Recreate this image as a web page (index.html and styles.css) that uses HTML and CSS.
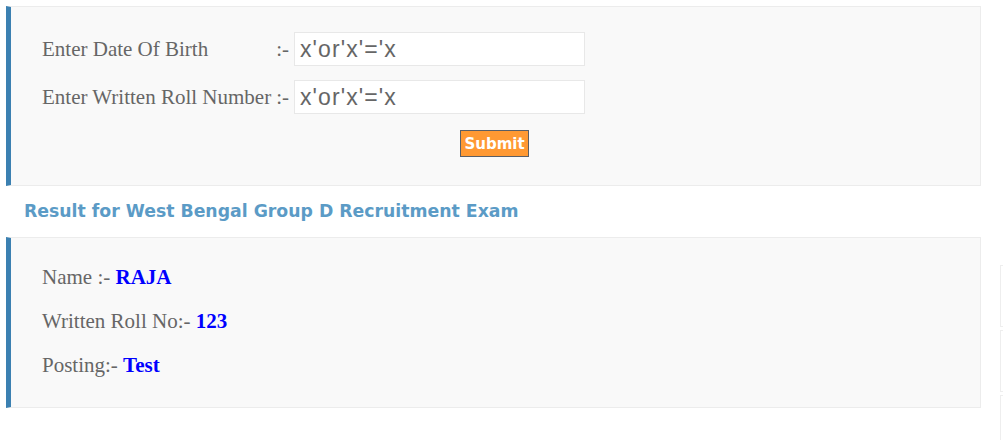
FILE: index.html
```html
<!DOCTYPE html>
<html>
<head>
<meta charset="utf-8">
<link rel="stylesheet" href="styles.css">
</head>
<body>
<div class="page">
  <main class="main">
    <section class="panel form-panel">
      <div class="form-grid">
        <div class="label"><span>Enter Date Of Birth</span><span>:-</span></div>
        <div class="field">x'or'x'='x</div>
        <div class="label"><span>Enter Written Roll Number</span><span>:-</span></div>
        <div class="field">x'or'x'='x</div>
      </div>
      <div class="actions"><button class="submit">Submit</button></div>
    </section>
    <h2 class="title">Result for West Bengal Group D Recruitment Exam</h2>
    <section class="panel result-panel">
      <p class="line">Name :- <b>RAJA</b></p>
      <p class="line">Written Roll No:- <b>123</b></p>
      <p class="line">Posting:- <b>Test</b></p>
    </section>
  </main>
  <aside class="side">
    <div class="widget"></div>
    <div class="widget"></div>
    <div class="widget"></div>
  </aside>
</div>
</body>
</html>
```

FILE: styles.css
```css
html, body {
  margin: 0;
  padding: 0;
  background: #fff;
  overflow: hidden;
}
.page {
  display: flex;
  gap: 19px;
  padding: 6px 0 0 6px;
  width: 1003px;
  box-sizing: border-box;
  overflow: hidden;
}
.main {
  width: 975px;
  flex: none;
}
.panel {
  background: #f9f9f9;
  border: 1px solid #ececec;
  border-left: 5px solid #3b80b1;
  box-sizing: border-box;
}
.form-panel {
  height: 180px;
  padding: 25px 0 0 31px;
}
.form-grid {
  display: grid;
  grid-template-columns: 247px 291px;
  column-gap: 5px;
  row-gap: 14px;
  align-items: center;
}
.label {
  display: flex;
  justify-content: space-between;
  font-family: "Liberation Serif", serif;
  font-size: 21px;
  color: #666;
}
.field {
  height: 34px;
  box-sizing: border-box;
  background: #fff;
  border: 1px solid #e8e8e8;
  padding: 0 5px;
  font-family: "Liberation Sans", sans-serif;
  font-size: 23px;
  letter-spacing: 1.1px;
  line-height: 32px;
  color: #666;
}
.actions {
  padding: 16px 0 0 418px;
}
.submit {
  display: block;
  height: 27px;
  width: 69px;
  padding: 0;
  background: #ff9933;
  border: 1px solid #5b5f66;
  color: #fff;
  font-family: "DejaVu Sans", Verdana, sans-serif;
  font-weight: bold;
  font-size: 15px;
}
.title {
  margin: 0;
  height: 51px;
  padding: 0 0 0 18px;
  box-sizing: border-box;
  font-family: "DejaVu Sans", Tahoma, sans-serif;
  font-weight: bold;
  font-size: 17.3px;
  line-height: 51px;
  color: #5b9bc6;
}
.result-panel {
  height: 171px;
  padding: 27px 0 0 31px;
}
.line {
  margin: 0 0 20px;
  font-family: "Liberation Serif", serif;
  font-size: 21px;
  line-height: 24px;
  color: #666;
}
.line b {
  color: #0000ff;
}
.side {
  display: flex;
  flex-direction: column;
  gap: 3px;
  padding-top: 259px;
}
.widget {
  width: 10px;
  border: 1px solid #eee;
  border-right: none;
  height: 60px;
}
```
